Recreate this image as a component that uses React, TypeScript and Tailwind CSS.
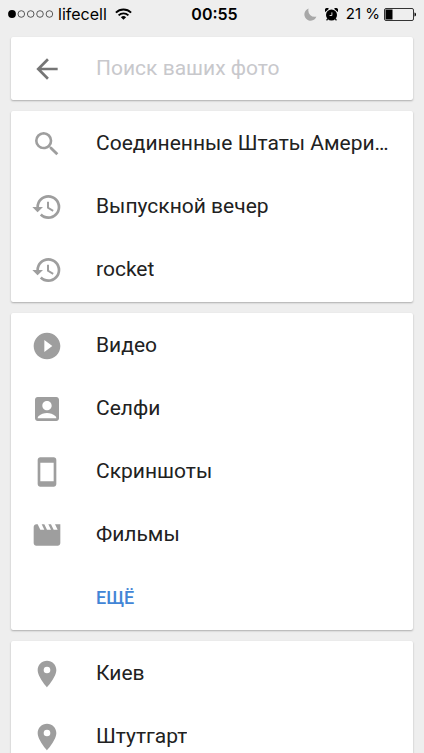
import React from 'react';
import type { IconType } from 'react-icons';
import {
  MdAccountBox,
  MdArrowBack,
  MdHistory,
  MdMovie,
  MdPlace,
  MdPlayCircleFilled,
  MdSearch,
  MdSmartphone,
} from 'react-icons/md';

interface Item {
  label: string;
  icon: IconType;
}

const recent: Item[] = [
  { label: 'Соединенные Штаты Амери…', icon: MdSearch },
  { label: 'Выпускной вечер', icon: MdHistory },
  { label: 'rocket', icon: MdHistory },
];

const categories: Item[] = [
  { label: 'Видео', icon: MdPlayCircleFilled },
  { label: 'Селфи', icon: MdAccountBox },
  { label: 'Скриншоты', icon: MdSmartphone },
  { label: 'Фильмы', icon: MdMovie },
];

const places: Item[] = [
  { label: 'Киев', icon: MdPlace },
  { label: 'Штутгарт', icon: MdPlace },
];

const SignalDots = () => (
  <svg width="46" height="8" viewBox="0 0 46 8" fill="none" stroke="#333" strokeWidth="0.8">
    <circle cx="4" cy="4" r="3.9" fill="#000" stroke="none" />
    <circle cx="13.3" cy="4" r="3.3" />
    <circle cx="22.7" cy="4" r="3.3" />
    <circle cx="32" cy="4" r="3.3" />
    <circle cx="41.4" cy="4" r="3.3" />
  </svg>
);

const WifiIcon = () => (
  <svg width="17" height="12" viewBox="0 0 17 12" fill="none" stroke="#000" strokeWidth="1.9">
    <path d="M0.9 4.6a10.8 10.8 0 0 1 15.2 0" />
    <path d="M3.6 7.4a7 7 0 0 1 9.8 0" />
    <path d="M8.5 11.8L5.9 9.2a3.7 3.7 0 0 1 5.2 0z" fill="#000" stroke="none" />
  </svg>
);

const MoonIcon = () => (
  <svg width="13" height="13" viewBox="0 0 13 13" fill="#a8a8a8">
    <path d="M4.6 0.6A6.2 6.2 0 1 0 12.4 8.6A6.4 6.4 0 0 1 4.6 0.6z" />
  </svg>
);

const AlarmIcon = () => (
  <svg width="13" height="13" viewBox="0 0 13 13">
    <circle cx="6.5" cy="7" r="5.5" />
    <path d="M0.3 4a2.4 2.4 0 0 1 3.6-3.2zM12.7 4a2.4 2.4 0 0 0-3.6-3.2z" />
    <path d="M2.8 10.5l-1.2 1.9M10.2 10.5l1.2 1.9" stroke="#000" strokeWidth="1.2" />
    <path d="M6.9 4.4v3.1H4.6" fill="none" stroke="#eee" strokeWidth="0.9" />
  </svg>
);

const BatteryIcon = () => (
  <svg width="33" height="13" viewBox="0 0 33 13">
    <rect x="0.5" y="0.5" width="29" height="12" rx="1.5" fill="none" stroke="#333" />
    <rect x="1.5" y="1.5" width="7" height="10" />
    <path d="M30.5 4.5c2 0.3 2 3.7 0 4z" />
  </svg>
);

const StatusBar = () => (
  <header className="grid h-7 grid-cols-[1fr_auto_1fr] items-center pr-[7px] pl-2 font-['Inter',sans-serif] text-base text-black">
    <div className="flex items-center gap-1">
      <SignalDots />
      <span>lifecell</span>
      <span className="pl-1">
        <WifiIcon />
      </span>
    </div>
    <span className="pl-1 font-semibold">00:55</span>
    <div className="flex items-center justify-end gap-2">
      <MoonIcon />
      <AlarmIcon />
      <div className="flex items-center gap-1">
        <span className="text-[15px]">21 %</span>
        <BatteryIcon />
      </div>
    </div>
  </header>
);

const Card: React.FC<{ children: React.ReactNode }> = ({ children }) => (
  <section className="rounded-xs bg-white py-px shadow-[0_1px_2px_rgba(0,0,0,0.28)]">{children}</section>
);

const ItemList: React.FC<{ items: Item[] }> = ({ items }) => (
  <ul>
    {items.map(({ label, icon: Icon }) => (
      <li key={label}>
        <button type="button" className="flex h-[63px] w-full items-center gap-[33px] px-5 text-left">
          <Icon className="size-8 shrink-0 text-[#9e9e9e]" />
          <span className="min-w-0 truncate">{label}</span>
        </button>
      </li>
    ))}
  </ul>
);

export default function App() {
  return (
    <div className="h-screen overflow-hidden bg-[#eeeeee] font-['Roboto',sans-serif] text-[21px] text-[#212121]">
      <StatusBar />
      <main className="flex flex-col gap-[11px] px-[11px] pt-[9px]">
        <form className="flex h-[63px] items-center gap-[33px] rounded-xs bg-white px-5 shadow-[0_1px_2px_rgba(0,0,0,0.28)]">
          <button type="button" aria-label="Назад">
            <MdArrowBack className="size-8 text-[#757575]" />
          </button>
          <input
            type="text"
            aria-label="Поиск"
            placeholder="Поиск ваших фото"
            className="min-w-0 flex-1 outline-none placeholder:text-[#c8c8cc]"
          />
        </form>
        <Card>
          <ItemList items={recent} />
        </Card>
        <Card>
          <ItemList items={categories} />
          <button type="button" className="flex h-[63px] w-full items-center pr-5 pl-[85px] text-lg font-medium text-[#4285d6]">
            ЕЩЁ
          </button>
        </Card>
        <Card>
          <ItemList items={places} />
        </Card>
      </main>
    </div>
  );
}
